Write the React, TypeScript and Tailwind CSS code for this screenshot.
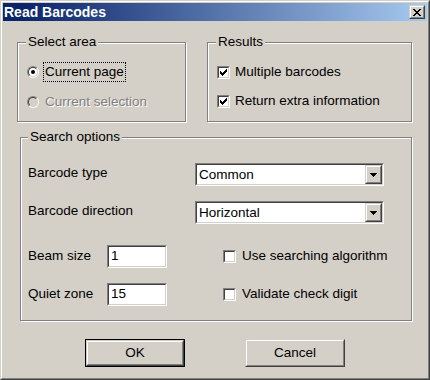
const font = "font-['Liberation_Sans',Arial,sans-serif]";

const sunkenOuter = "border border-t-[#808080] border-l-[#808080] border-r-white border-b-white";
const sunkenInner = "border border-t-[#404040] border-l-[#404040] border-r-[#d4d0c8] border-b-[#d4d0c8]";
const raisedOuter = "border border-t-[#d4d0c8] border-l-[#d4d0c8] border-r-[#404040] border-b-[#404040]";
const raisedInner = "border border-t-white border-l-white border-r-[#808080] border-b-[#808080]";

function Radio({ checked, disabled }: { checked?: boolean; disabled?: boolean }) {
  return (
    <span className={`flex w-[12px] h-[12px] shrink-0 rounded-full ${sunkenOuter}`}>
      <span
        className={`flex flex-1 items-center justify-center rounded-full ${sunkenInner} ${
          disabled ? "bg-[#d4d0c8]" : "bg-white"
        }`}
      >
        {checked && <span className="w-[4px] h-[4px] rounded-full bg-black" />}
      </span>
    </span>
  );
}

function Check({ checked }: { checked?: boolean }) {
  return (
    <span className={`flex w-[13px] h-[13px] shrink-0 ${sunkenOuter}`}>
      <span className={`flex flex-1 items-center justify-center bg-white ${sunkenInner}`}>
        {checked && (
          <svg width="7" height="7" viewBox="0 0 7 7">
            <path
              d="M6 0h1v1h-1z M5 1h2v1h-2z M0 2h1v1h-1z M4 2h3v1h-3z M0 3h2v1h-2z M3 3h3v1h-3z M0 4h5v1h-5z M1 5h3v1h-3z M2 6h1v1h-1z"
              fill="#000"
            />
          </svg>
        )}
      </span>
    </span>
  );
}

function Combo({ value }: { value: string }) {
  return (
    <div className={`flex w-[189px] h-[23px] ${sunkenOuter}`}>
      <div className={`flex flex-1 items-center bg-white ${sunkenInner}`}>
        <span className="flex-1 pl-[2px] text-[13.5px] leading-[16px]">{value}</span>
        <span className={`flex w-[17px] h-full ${raisedOuter}`}>
          <span className={`flex flex-1 items-center justify-center bg-[#d4d0c8] ${raisedInner}`}>
            <svg width="7" height="4" viewBox="0 0 7 4">
              <path d="M0 0h7v1h-7z M1 1h5v1h-5z M2 2h3v1h-3z M3 3h1v1h-1z" fill="#000" />
            </svg>
          </span>
        </span>
      </div>
    </div>
  );
}

function TextBox({ value }: { value: string }) {
  return (
    <div className={`flex w-[60px] h-[23px] ${sunkenOuter}`}>
      <div className={`flex flex-1 items-center bg-white pl-[2px] text-[13.5px] ${sunkenInner}`}>
        {value}
      </div>
    </div>
  );
}

function Group({
  title,
  className,
  legendClass,
  children,
}: {
  title: string;
  className: string;
  legendClass: string;
  children: React.ReactNode;
}) {
  return (
    <fieldset
      className={`border border-[#808080] shadow-[inset_1px_1px_0_#fff,1px_1px_0_#fff] ${className}`}
    >
      <legend className={`px-[2px] bg-[#d4d0c8] text-[13.5px] leading-[14px] ${legendClass}`}>
        {title}
      </legend>
      {children}
    </fieldset>
  );
}

export default function App() {
  return (
    <div
      className={`w-[430px] h-[380px] flex bg-[#d4d0c8] text-black ${font} border border-t-[#d4d0c8] border-l-[#d4d0c8] border-r-[#404040] border-b-[#404040]`}
    >
      <div className="flex flex-1 flex-col p-[1px] border border-t-white border-l-white border-r-[#808080] border-b-[#808080]">
        {/* title bar */}
        <div className="flex h-[18px] items-center justify-between bg-[linear-gradient(to_right,#0a246a_4%,#a6caf0)] pl-[1px] pr-[2px]">
          <span className="text-white font-bold text-[14px] leading-[18px]">Read Barcodes</span>
          <span className={`flex w-[16px] h-[14px] ${raisedOuter}`}>
            <span className={`flex flex-1 items-center justify-center bg-[#d4d0c8] ${raisedInner}`}>
              <svg width="8" height="7" viewBox="0 0 8 7">
                <path
                  d="M0 0h2v1h-2z M6 0h2v1h-2z M1 1h2v1h-2z M5 1h2v1h-2z M2 2h4v1h-4z M3 3h2v1h-2z M2 4h4v1h-4z M1 5h2v1h-2z M5 5h2v1h-2z M0 6h2v1h-2z M6 6h2v1h-2z"
                  fill="#000"
                />
              </svg>
            </span>
          </span>
        </div>

        {/* top groups */}
        <div className="flex mt-[14px] pl-[14px] gap-[21px]">
          <Group title="Select area" className="w-[169px] h-[87px]" legendClass="ml-[8px]">
            <div className="flex flex-col pl-[9px] pt-[13px] gap-[10px] text-[13.5px]">
              <div className="flex h-[20px] items-center gap-[4px]">
                <Radio checked />
                <span className="px-[1px] leading-[18px] border border-dotted border-black">
                  Current page
                </span>
              </div>
              <div className="flex h-[20px] items-center gap-[4px]">
                <Radio disabled />
                <span className="px-[1px] leading-[18px] border border-transparent text-[#808080] [text-shadow:1px_1px_0_#fff]">
                  Current selection
                </span>
              </div>
            </div>
          </Group>
          <Group title="Results" className="w-[205px] h-[87px]" legendClass="ml-[8px]">
            <div className="flex flex-col pl-[9px] pt-[13px] gap-[9px] text-[13.5px]">
              <div className="flex h-[20px] items-center gap-[5px]">
                <Check checked />
                <span>Multiple barcodes</span>
              </div>
              <div className="flex h-[20px] items-center gap-[5px]">
                <Check checked />
                <span>Return extra information</span>
              </div>
            </div>
          </Group>
        </div>

        {/* search options */}
        <Group title="Search options" className="mt-[8px] ml-[17px] w-[392px] h-[191px]" legendClass="ml-[7px]">
          <div className="flex flex-col pl-[7px] pt-[19px] text-[13.5px]">
            <div className="flex items-center">
              <span className="w-[167px] pb-[2px]">Barcode type</span>
              <Combo value="Common" />
            </div>
            <div className="flex items-center mt-[15px]">
              <span className="w-[167px] pb-[2px]">Barcode direction</span>
              <Combo value="Horizontal" />
            </div>
            <div className="flex items-center mt-[21px]">
              <span className="w-[79px]">Beam size</span>
              <TextBox value="1" />
              <span className="ml-[56px] flex items-center gap-[6px]">
                <Check />
                <span>Use searching algorithm</span>
              </span>
            </div>
            <div className="flex items-center mt-[15px]">
              <span className="w-[79px]">Quiet zone</span>
              <TextBox value="15" />
              <span className="ml-[56px] flex items-center gap-[6px]">
                <Check />
                <span>Validate check digit</span>
              </span>
            </div>
          </div>
        </Group>

        {/* buttons */}
        <div className="flex justify-center gap-[60px] mt-[18px] text-[13.5px]">
          <button className="flex w-[100px] h-[28px] border border-black">
            <span className={`flex flex-1 ${raisedOuter}`}>
              <span className={`flex flex-1 items-center justify-center ${raisedInner}`}>OK</span>
            </span>
          </button>
          <button className={`flex w-[100px] h-[28px] ${raisedOuter}`}>
            <span className={`flex flex-1 items-center justify-center ${raisedInner}`}>Cancel</span>
          </button>
        </div>
      </div>
    </div>
  );
}
